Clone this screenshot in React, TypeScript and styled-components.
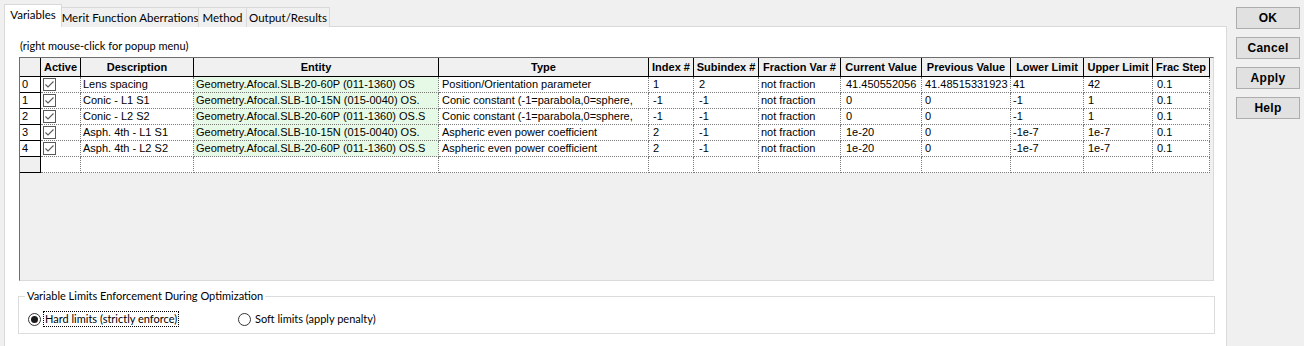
import React from 'react';
import styled, { createGlobalStyle } from 'styled-components';

const Global = createGlobalStyle`
  html, body { margin: 0; padding: 0; background: #f0f0f0; width: 1304px; height: 346px; overflow: hidden; }
  body { font-family: "Liberation Sans", Arial, sans-serif; color: #000; }
`;

const UI_FONT = `Lato, "Noto Sans", sans-serif`;

const COLS = [21, 40, 113, 245, 210, 45, 65, 82, 81, 89, 73, 69, 57];
const PADS = [2, 2, 2, 2, 3, 4, 5, 2, 5, 3, 2, 4, 4];
const TEMPLATE = COLS.map((c) => `${c}px`).join(' ');

const Window = styled.div`
  display: flex;
  align-items: flex-start;
  height: 346px;
  overflow: hidden;
`;

const Left = styled.div`
  display: flex;
  flex-direction: column;
  padding: 4px 0 0 4px;
`;

const TabBar = styled.div`
  display: flex;
  align-items: flex-end;
  height: 23px;
  margin-bottom: -1px;
  position: relative;
  z-index: 1;
`;

const Tab = styled.div<{ $active?: boolean; $w: number }>`
  box-sizing: border-box;
  width: ${(p) => p.$w}px;
  height: ${(p) => (p.$active ? 23 : 20)}px;
  margin-left: ${(p) => (p.$active ? 0 : -1)}px;
  border: 1px solid #d9d9d9;
  border-bottom: none;
  background: ${(p) => (p.$active ? '#ffffff' : '#f0f0f0')};
  font-family: ${UI_FONT};
  font-size: 11.5px;
  display: flex;
  align-items: ${(p) => (p.$active ? 'flex-start' : 'center')};
  padding-top: ${(p) => (p.$active ? 3 : 0)}px;
  justify-content: center;
  white-space: nowrap;
`;

const Panel = styled.div`
  box-sizing: border-box;
  width: 1223px;
  height: 330px;
  border: 1px solid #d9d9d9;
  border-bottom: none;
  background: #ffffff;
  display: flex;
  flex-direction: column;
`;

const Note = styled.div`
  height: 13px;
  line-height: 13px;
  margin: 12px 0 5px 15px;
  font-family: ${UI_FONT};
  font-size: 11px;
  white-space: nowrap;
`;

const GridFrame = styled.div`
  box-sizing: border-box;
  width: 1195px;
  height: 224px;
  margin-left: 14px;
  border: 1px solid;
  border-color: #6d6d6d #dadada #dadada #6d6d6d;
  background: #f0f0f0;
  display: flex;
  flex-direction: column;
`;

const Row = styled.div`
  display: grid;
  grid-template-columns: ${TEMPLATE};
`;

const HeadCell = styled.div`
  box-sizing: border-box;
  height: 19px;
  background: #f0f0f0;
  border-right: 1px solid #000;
  border-bottom: 1px solid #000;
  font-weight: bold;
  font-size: 11px;
  line-height: 18px;
  text-align: center;
  white-space: nowrap;
  overflow: hidden;
`;

const RowHead = styled.div<{ $blank?: boolean }>`
  box-sizing: border-box;
  height: 16px;
  background: ${(p) => (p.$blank ? '#f0f0f0' : '#ffffff')};
  border-right: 1px solid #000;
  border-bottom: 1px solid #000;
  font-size: 11px;
  line-height: 15px;
  padding-left: 2px;
`;

const Cell = styled.div<{ $pad: number; $green?: boolean }>`
  box-sizing: border-box;
  height: 16px;
  background: ${(p) => (p.$green ? '#e6f9e6' : '#ffffff')};
  border-right: 1px dotted #7a7a7a;
  border-bottom: 1px dotted #7a7a7a;
  font-size: 11px;
  line-height: 15px;
  padding-left: ${(p) => p.$pad}px;
  white-space: nowrap;
  overflow: hidden;
  display: flex;
  align-items: center;
`;

const Check = styled.svg`
  display: block;
  flex: none;
`;

const GroupBox = styled.fieldset`
  box-sizing: border-box;
  width: 1197px;
  height: 46px;
  margin: 7px 0 0 13px;
  padding: 0;
  border: 1px solid #dcdcdc;
  display: block;
`;

const Legend = styled.legend`
  font-family: ${UI_FONT};
  font-size: 11px;
  line-height: 16px;
  padding: 0 2px;
  margin-left: 6px;
  white-space: nowrap;
`;

const RadioRow = styled.div`
  display: flex;
  align-items: center;
  height: 18px;
  margin-top: 6px;
  padding-left: 9px;
`;

const RadioOption = styled.div<{ $w: number }>`
  display: flex;
  align-items: center;
  width: ${(p) => p.$w}px;
  font-family: ${UI_FONT};
  font-size: 11px;
  white-space: nowrap;
`;

const RadioCircle = styled.span<{ $on?: boolean }>`
  box-sizing: border-box;
  width: 13px;
  height: 13px;
  border-radius: 50%;
  border: 1px solid #333;
  background: #fff;
  display: flex;
  align-items: center;
  justify-content: center;
  flex: none;
  &::after {
    content: '';
    display: ${(p) => (p.$on ? 'block' : 'none')};
    width: 7px;
    height: 7px;
    border-radius: 50%;
    background: #1a1a1a;
  }
`;

const RadioLabel = styled.span<{ $focus?: boolean }>`
  margin-left: 2px;
  padding: 0 1px;
  line-height: 14px;
  border: 1px dotted ${(p) => (p.$focus ? '#000' : 'transparent')};
`;

const ButtonCol = styled.div`
  display: flex;
  flex-direction: column;
  gap: 8px;
  margin: 7px 0 0 9px;
`;

const Button = styled.div`
  box-sizing: border-box;
  width: 64px;
  height: 22px;
  background: #e1e1e1;
  border: 1px solid #adadad;
  font-weight: bold;
  font-size: 12px;
  letter-spacing: 0.3px;
  display: flex;
  align-items: center;
  justify-content: center;
`;

const headers = [
  '', 'Active', 'Description', 'Entity', 'Type', 'Index #', 'Subindex #', 'Fraction Var #',
  'Current Value', 'Previous Value', 'Lower Limit', 'Upper Limit', 'Frac Step',
];

const rows: string[][] = [
  ['Lens spacing', 'Geometry.Afocal.SLB-20-60P (011-1360) OS', 'Position/Orientation parameter', '1', '2', 'not fraction', '41.450552056', '41.48515331923', '41', '42', '0.1'],
  ['Conic - L1 S1', 'Geometry.Afocal.SLB-10-15N (015-0040) OS.', 'Conic constant (-1=parabola,0=sphere,', '-1', '-1', 'not fraction', '0', '0', '-1', '1', '0.1'],
  ['Conic - L2 S2', 'Geometry.Afocal.SLB-20-60P (011-1360) OS.S', 'Conic constant (-1=parabola,0=sphere,', '-1', '-1', 'not fraction', '0', '0', '-1', '1', '0.1'],
  ['Asph. 4th - L1 S1', 'Geometry.Afocal.SLB-10-15N (015-0040) OS.', 'Aspheric even power coefficient', '2', '-1', 'not fraction', '1e-20', '0', '-1e-7', '1e-7', '0.1'],
  ['Asph. 4th - L2 S2', 'Geometry.Afocal.SLB-20-60P (011-1360) OS.S', 'Aspheric even power coefficient', '2', '-1', 'not fraction', '1e-20', '0', '-1e-7', '1e-7', '0.1'],
];

const CheckBox = () => (
  <Check width="13" height="13" viewBox="0 0 13 13">
    <rect x="0.5" y="0.5" width="12" height="12" fill="#fff" stroke="#5a5a5a" />
    <path d="M2.5 6.5 L5 9 L10.5 3.5" fill="none" stroke="#5a5a5a" strokeWidth="1.1" />
  </Check>
);

export default function App() {
  return (
    <>
      <Global />
      <Window>
        <Left>
          <TabBar>
            <Tab $active $w={58}>Variables</Tab>
            <Tab $w={138}>Merit Function Aberrations</Tab>
            <Tab $w={49}>Method</Tab>
            <Tab $w={84}>Output/Results</Tab>
          </TabBar>
          <Panel>
            <Note>(right mouse-click for popup menu)</Note>
            <GridFrame>
              <Row>
                {headers.map((h, i) => (
                  <HeadCell key={i}>{h}</HeadCell>
                ))}
              </Row>
              {rows.map((r, ri) => (
                <Row key={ri}>
                  <RowHead>{ri}</RowHead>
                  <Cell $pad={PADS[1]}>
                    <CheckBox />
                  </Cell>
                  {r.map((v, ci) => (
                    <Cell key={ci} $pad={PADS[ci + 2]} $green={ci === 1}>
                      {v}
                    </Cell>
                  ))}
                </Row>
              ))}
              <Row>
                <RowHead $blank />
                {COLS.slice(1).map((_, ci) => (
                  <Cell key={ci} $pad={0} />
                ))}
              </Row>
            </GridFrame>
            <GroupBox>
              <Legend>Variable Limits Enforcement During Optimization</Legend>
              <RadioRow>
                <RadioOption $w={210}>
                  <RadioCircle $on />
                  <RadioLabel $focus>Hard limits (strictly enforce)</RadioLabel>
                </RadioOption>
                <RadioOption $w={200}>
                  <RadioCircle />
                  <RadioLabel>Soft limits (apply penalty)</RadioLabel>
                </RadioOption>
              </RadioRow>
            </GroupBox>
          </Panel>
        </Left>
        <ButtonCol>
          <Button>OK</Button>
          <Button>Cancel</Button>
          <Button>Apply</Button>
          <Button>Help</Button>
        </ButtonCol>
      </Window>
    </>
  );
}
